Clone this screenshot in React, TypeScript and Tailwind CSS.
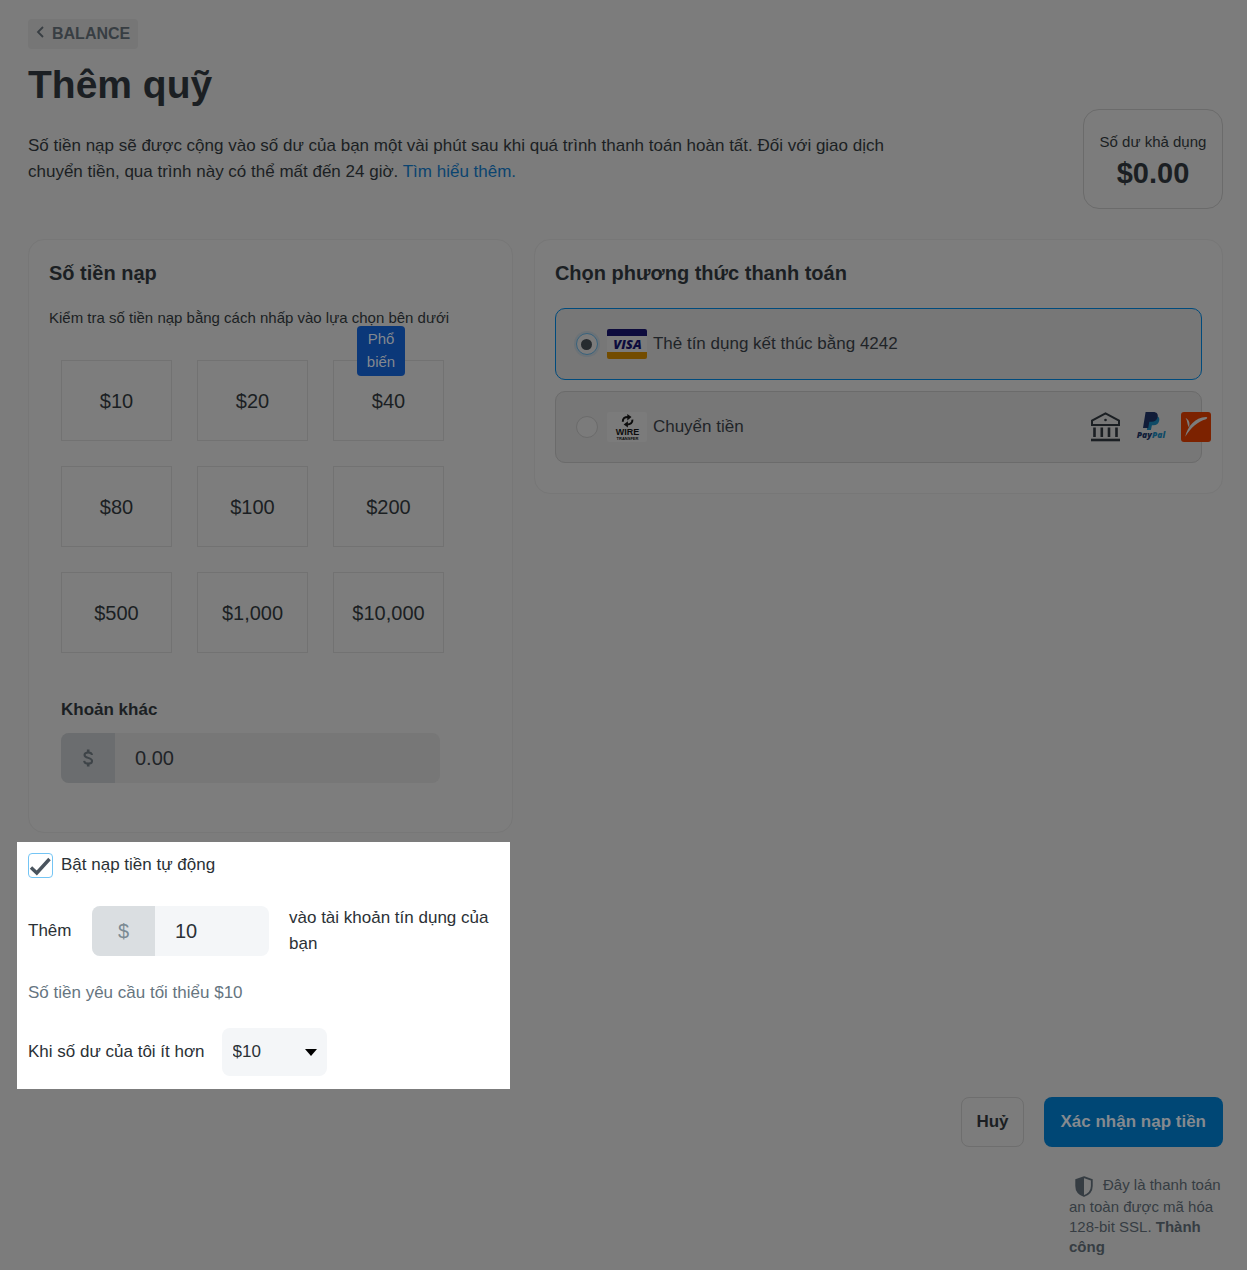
import { useState } from "react";
import type { ReactNode } from "react";

const amounts = [
  { value: "10", label: "$10" },
  { value: "20", label: "$20" },
  { value: "40", label: "$40", popular: true },
  { value: "80", label: "$80" },
  { value: "100", label: "$100" },
  { value: "200", label: "$200" },
  { value: "500", label: "$500" },
  { value: "1000", label: "$1,000" },
  { value: "10000", label: "$10,000" },
];

function VisaLogo() {
  return (
    <svg viewBox="0 0 40 30" className="h-[30px] w-10 shrink-0" aria-label="Visa" role="img">
      <rect width="40" height="30" rx="2" fill="#7b7b7b" />
      <path d="M2 0h36a2 2 0 0 1 2 2v5H0V2a2 2 0 0 1 2-2z" fill="#0d0b3d" />
      <path d="M0 23h40v5a2 2 0 0 1-2 2H2a2 2 0 0 1-2-2z" fill="#734c00" />
      <text
        x="20.5"
        y="19.5"
        textAnchor="middle"
        fontFamily="Open Sans, sans-serif"
        fontSize="13"
        fontWeight="800"
        fontStyle="italic"
        fill="#0d0b3d"
      >
        VISA
      </text>
    </svg>
  );
}

function WireLogo() {
  return (
    <svg viewBox="0 0 40 30" className="h-[30px] w-10 shrink-0" aria-label="Wire transfer" role="img">
      <rect width="40" height="30" rx="2" fill="#7b7b7b" />
      <path d="M15.8 9.8C15.6 6.5 17.8 4.900 21 4.900" fill="none" stroke="#0c0c0c" strokeWidth="2" />
      <path d="M20.3 2l4.200 3-4.200 3.400z" fill="#0c0c0c" />
      <path d="M25.4 7.600c.2 3.300-2 4.900-5.200 4.900" fill="none" stroke="#0c0c0c" strokeWidth="2" />
      <path d="M20.9 9.200l-4.200 3.300 4.200 3.100z" fill="#0c0c0c" />
      <text
        x="20.5"
        y="23"
        textAnchor="middle"
        fontFamily="Liberation Sans, sans-serif"
        fontSize="9"
        fontWeight="700"
        fill="#0c0c0c"
      >
        WIRE
      </text>
      <text
        x="20.5"
        y="28"
        textAnchor="middle"
        fontFamily="Liberation Sans, sans-serif"
        fontSize="4"
        fontWeight="700"
        fill="#0c0c0c"
      >
        TRANSFER
      </text>
    </svg>
  );
}

function BankIcon() {
  return (
    <svg viewBox="0 0 30 30" className="size-[30px]" aria-hidden="true">
      <path d="M1 13V8.6L14.5 1.4 28 8.6V13z" fill="none" stroke="#1b1f23" strokeWidth="2" />
      <circle cx="14.5" cy="8" r="1.3" fill="#1b1f23" />
      <path
        d="M3.5 15.5v9.5M10.8 15.5v9.5M18 15.5v9.5M25.5 15.5v9.5"
        stroke="#1b1f23"
        strokeWidth="2.6"
      />
      <path d="M0 28h29" stroke="#1b1f23" strokeWidth="2.6" />
    </svg>
  );
}

function PaypalLogo() {
  return (
    <svg viewBox="0 0 30 30" className="size-[30px]" aria-label="PayPal" role="img">
      <path
        d="M12.5 4h8c2.6.6 3.3 2.6 2.6 5-.8 2.9-2.8 4.2-5.6 4.2h-1.6l-1 4.800h-4z"
        fill="#0f4a66"
      />
      <path
        d="M9.6 0h7.600c3.600 0 5.200 2.100 4.400 5.200-.8 3.200-3.100 4.500-6.100 4.500h-2.200l-1.100 6.300H7z"
        fill="#111c38"
      />
      <text
        x="15"
        y="26"
        textAnchor="middle"
        fontFamily="Open Sans, sans-serif"
        fontSize="8.5"
        fontWeight="800"
        fontStyle="italic"
      >
        <tspan fill="#111c38">Pay</tspan>
        <tspan fill="#0f4a66">Pal</tspan>
      </text>
    </svg>
  );
}

function PayoneerLogo() {
  return (
    <svg viewBox="0 0 30 30" className="size-[30px]" aria-hidden="true">
      <rect width="30" height="30" rx="3" fill="#7c2200" />
      <path
        d="M4.2 24.8C6.500 14.500 14 5.400 25 5c1.800 0 1.600 1.600 0 2.200C16.500 9.600 10 15.500 4.200 24.800z"
        fill="#7c7c7c"
      />
      <path d="M4.6 6c3.800 2.200 4.600 5 3.400 9.600C6 12.500 6.600 9 4.600 6z" fill="#7c7c7c" />
    </svg>
  );
}

function DollarIcon() {
  return (
    <svg viewBox="0 0 12 18" className="h-[18px] w-3" aria-hidden="true">
      <path
        d="M10 6C9.800 4.300 8.400 3.500 6.200 3.500 4 3.500 2.500 4.400 2.500 6c0 1.700 1.500 2.300 3.700 2.900 2.300.6 3.900 1.300 3.900 3.200 0 1.600-1.500 2.500-3.900 2.500-2.500 0-3.900-1-4.100-2.800"
        fill="none"
        stroke="#3e4448"
        strokeWidth="2"
      />
      <path d="M6.200.5v3M6.200 14.500v3" stroke="#3e4448" strokeWidth="2.600" />
    </svg>
  );
}

function ShieldIcon() {
  return (
    <svg viewBox="0 0 18 21" className="inline-block h-[21px] w-[18px] align-middle" aria-hidden="true">
      <path
        d="M9 1.2 16.8 4v6c0 5-3.200 8.300-7.800 10C4.400 18.300 1.200 15 1.200 10V4z"
        fill="none"
        stroke="#363d43"
        strokeWidth="1.8"
      />
      <path d="M9 1.2V20C4.400 18.300 1.200 15 1.200 10V4z" fill="#363d43" />
    </svg>
  );
}

type MethodProps = {
  id: string;
  label: string;
  logo: ReactNode;
  selected: boolean;
  onSelect: () => void;
  children?: ReactNode;
};

function PaymentMethod({ id, label, logo, selected, onSelect, children }: MethodProps) {
  return (
    <div
      className={`flex h-[72px] items-center rounded-[10px] border bg-[#777777] pl-5 ${
        selected ? "border-[#004b7d]" : "border-[#6b6b6b]"
      }`}
    >
      <input
        type="radio"
        id={id}
        name="method"
        checked={selected}
        onChange={onSelect}
        className="grid size-[22px] shrink-0 appearance-none place-items-center rounded-full border border-[#6b6b6b] bg-[#7b7b7b] checked:border-[#38627c] checked:ring-2 checked:ring-[#6b7277] checked:before:size-[11px] checked:before:rounded-full checked:before:bg-[#262b2f]"
      />
      <label htmlFor={id} className="flex items-center gap-[6px] pl-[9px] text-[#1f2428]">
        {logo}
        {label}
      </label>
      {children}
    </div>
  );
}

export default function App() {
  const [amount, setAmount] = useState("");
  const [method, setMethod] = useState("card");

  return (
    <main className="min-h-screen bg-[#7c7c7c] pt-[19px] pr-[13px] pb-3 pl-[17px] font-['Liberation_Sans',Arial,sans-serif] text-[17px] leading-[26px] text-[#1b1f23]">
      <header className="px-[11px]">
        <a
          href="#balance"
          className="inline-flex h-[30px] items-center gap-2 rounded bg-[#767676] px-2 text-base font-bold text-[#383e43]"
        >
          <svg viewBox="0 0 8 12" className="mb-1 h-3 w-2" aria-hidden="true">
            <path d="M7 1 2 6l5 5" fill="none" stroke="#383e43" strokeWidth="1.8" />
          </svg>
          BALANCE
        </a>
        <h1 className="mt-3 text-[39px] leading-[48px] font-bold">Thêm quỹ</h1>
        <div className="flex items-start justify-between">
          <p className="mt-6 max-w-[900px]">
            Số tiền nạp sẽ được cộng vào số dư của bạn một vài phút sau khi quá trình thanh toán hoàn
            tất. Đối với giao dịch chuyển tiền, qua trình này có thể mất đến 24 giờ.{" "}
            <a href="#learn-more" className="text-[#0b4470]">
              Tìm hiểu thêm.
            </a>
          </p>
          <div className="flex h-[100px] w-[140px] shrink-0 flex-col items-center justify-center rounded-2xl border border-[#6b6b6b] pt-[3px]">
            <span className="text-[15px] leading-6">Số dư khả dụng</span>
            <strong className="text-[29px] leading-[38px]">$0.00</strong>
          </div>
        </div>
      </header>

      <div className="mt-[30px] grid grid-cols-[19fr_27fr] items-start gap-[21px] px-[11px]">
        <section className="rounded-2xl border border-[#777777] bg-[#7d7d7d] px-5 pt-5 pb-[49px]">
          <h2 className="text-xl leading-[26px] font-bold">Số tiền nạp</h2>
          <p className="mt-5 text-[15px] leading-6">
            Kiểm tra số tiền nạp bằng cách nhấp vào lựa chọn bên dưới
          </p>
          <div className="mt-[30px] grid max-w-[407px] grid-cols-3 gap-[25px] px-3">
            {amounts.map((item) => (
              <button
                key={item.value}
                type="button"
                onClick={() => setAmount(item.value)}
                className="relative h-[81px] border border-[#727272] text-xl"
              >
                {item.label}
                {item.popular && (
                  <span className="absolute -top-[35px] left-[23px] w-12 rounded bg-[#0b3879] px-2 pt-px pb-[3px] text-[15px] leading-[23px] text-[#83888f]">
                    Phổ biến
                  </span>
                )}
              </button>
            ))}
          </div>
          <div className="mt-11 max-w-[403px] px-3">
            <label htmlFor="other-amount" className="block font-bold">
              Khoản khác
            </label>
            <div className="mt-[10px] flex h-[50px] overflow-hidden rounded-lg bg-[#777777]">
              <span className="flex w-[54px] shrink-0 items-center justify-center bg-[#6b6d6f]">
                <DollarIcon />
              </span>
              <input
                id="other-amount"
                type="text"
                value={amount}
                onChange={(e) => setAmount(e.target.value)}
                placeholder="0.00"
                className="w-full min-w-0 px-5 text-xl outline-none placeholder:text-[#1f2428]"
              />
            </div>
          </div>
        </section>

        <section className="rounded-2xl border border-[#777777] bg-[#7d7d7d] px-5 pt-5 pb-[30px]">
          <h2 className="text-xl leading-[26px] font-bold">Chọn phương thức thanh toán</h2>
          <div className="mt-[22px] flex flex-col gap-[11px]">
            <PaymentMethod
              id="method-card"
              label="Thẻ tín dụng kết thúc bằng 4242"
              logo={<VisaLogo />}
              selected={method === "card"}
              onSelect={() => setMethod("card")}
            />
            <PaymentMethod
              id="method-wire"
              label="Chuyển tiền"
              logo={<WireLogo />}
              selected={method === "wire"}
              onSelect={() => setMethod("wire")}
            >
              <div className="-mr-[10px] ml-auto flex gap-[15px]">
                <BankIcon />
                <PaypalLogo />
                <PayoneerLogo />
              </div>
            </PaymentMethod>
          </div>
        </section>
      </div>

      <section className="mt-[9px] w-[493px] max-w-full bg-white px-[11px] pt-[9px] pb-[13px] text-[#2b3136]">
        <div className="flex items-center gap-2">
          <span className="relative mt-[2px] size-[25px]">
            <input
              id="auto-recharge"
              type="checkbox"
              defaultChecked
              className="peer block size-[25px] appearance-none rounded border border-[#74c5f5] bg-white"
            />
            <svg
              viewBox="0 0 25 25"
              className="pointer-events-none absolute inset-0 hidden size-[25px] peer-checked:block"
              aria-hidden="true"
            >
              <path d="M3 14.5 8.8 20 21.5 6" fill="none" stroke="#4a545e" strokeWidth="3.4" />
            </svg>
          </span>
          <label htmlFor="auto-recharge">Bật nạp tiền tự động</label>
        </div>

        <div className="mt-[27px] flex items-center">
          <label htmlFor="auto-amount" className="w-16 shrink-0">
            Thêm
          </label>
          <div className="flex h-[50px] w-[177px] shrink-0 overflow-hidden rounded-lg bg-[#f4f6f8]">
            <span className="flex w-[63px] shrink-0 items-center justify-center bg-[#dadee1] text-xl text-[#7b8a93]">
              $
            </span>
            <input
              id="auto-amount"
              type="text"
              defaultValue="10"
              className="w-full min-w-0 px-5 text-xl outline-none"
            />
          </div>
          <p className="pl-5">vào tài khoản tín dụng của bạn</p>
        </div>

        <p className="mt-[23px] text-[#66757f]">Số tiền yêu cầu tối thiểu $10</p>

        <div className="mt-[22px] flex items-center gap-[17px]">
          <label htmlFor="threshold">Khi số dư của tôi ít hơn</label>
          <div className="relative">
            <select
              id="threshold"
              defaultValue="10"
              className="block h-12 w-[105px] appearance-none rounded-lg bg-[#f4f6f8] pl-[11px]"
            >
              <option value="10">$10</option>
              <option value="20">$20</option>
              <option value="40">$40</option>
            </select>
            <svg
              viewBox="0 0 12 7"
              className="pointer-events-none absolute top-[21px] right-[10px] h-[7px] w-3"
              aria-hidden="true"
            >
              <path d="M0 0h12L6 7z" fill="#000" />
            </svg>
          </div>
        </div>
      </section>

      <footer className="mt-2 flex flex-col items-end px-[11px]">
        <div className="flex gap-5 font-bold">
          <button type="button" className="h-[50px] rounded-lg border border-[#6e6e6e] px-[14px]">
            Huỷ
          </button>
          <button type="button" className="h-[50px] rounded-lg bg-[#004775] px-[17px] text-[#858a8f]">
            Xác nhận nạp tiền
          </button>
        </div>
        <p className="mt-7 w-[154px] text-[15px] leading-5 text-[#363d43]">
          <span className="pr-[10px] pl-[6px]">
            <ShieldIcon />
          </span>
          Đây là thanh toán an toàn được mã hóa 128-bit SSL. <strong>Thành công</strong>
        </p>
      </footer>
    </main>
  );
}
